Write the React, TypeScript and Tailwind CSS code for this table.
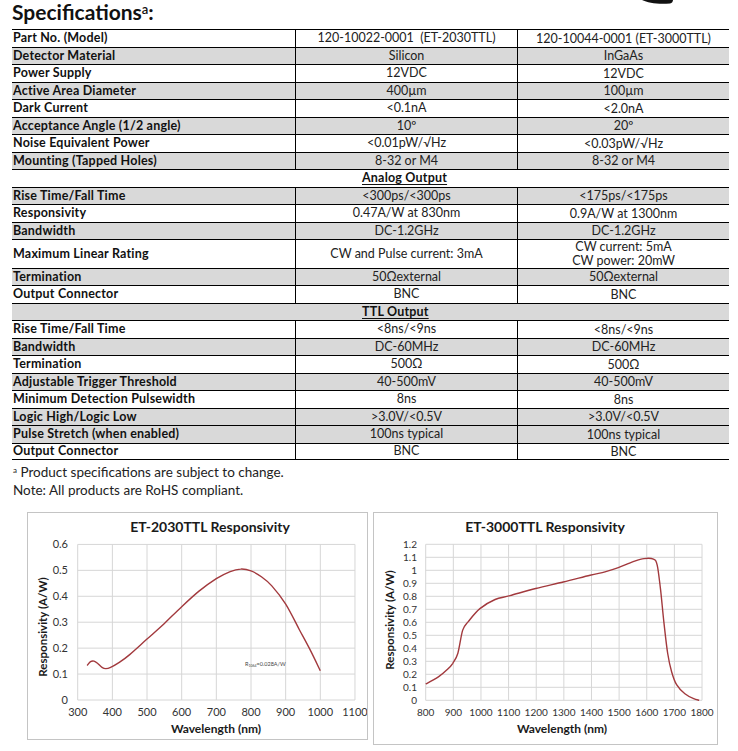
type Row = {
  label?: string
  a?: string
  b?: string | string[]
  gray?: boolean
  section?: string
  tall?: boolean
}

const rows: Row[] = [
  { label: "Part No. (Model)", a: "120-10022-0001\u00a0\u00a0(ET-2030TTL)", b: "120-10044-0001 (ET-3000TTL)" },
  { label: "Detector Material", a: "Silicon", b: "InGaAs", gray: true },
  { label: "Power Supply", a: "12VDC", b: "12VDC" },
  { label: "Active Area Diameter", a: "400µm", b: "100µm", gray: true },
  { label: "Dark Current", a: "<0.1nA", b: "<2.0nA" },
  { label: "Acceptance Angle (1/2 angle)", a: "10º", b: "20º", gray: true },
  { label: "Noise Equivalent Power", a: "<0.01pW/√Hz", b: "<0.03pW/√Hz" },
  { label: "Mounting (Tapped Holes)", a: "8-32 or M4", b: "8-32 or M4", gray: true },
  { section: "Analog Output" },
  { label: "Rise Time/Fall Time", a: "<300ps/<300ps", b: "<175ps/<175ps", gray: true },
  { label: "Responsivity", a: "0.47A/W at 830nm", b: "0.9A/W at 1300nm" },
  { label: "Bandwidth", a: "DC-1.2GHz", b: "DC-1.2GHz", gray: true },
  { label: "Maximum Linear Rating", a: "CW and Pulse current: 3mA", b: ["CW current: 5mA", "CW power: 20mW"], tall: true },
  { label: "Termination", a: "50Ωexternal", b: "50Ωexternal", gray: true },
  { label: "Output Connector", a: "BNC", b: "BNC" },
  { section: "TTL Output", gray: true },
  { label: "Rise Time/Fall Time", a: "<8ns/<9ns", b: "<8ns/<9ns" },
  { label: "Bandwidth", a: "DC-60MHz", b: "DC-60MHz", gray: true },
  { label: "Termination", a: "500Ω", b: "500Ω" },
  { label: "Adjustable Trigger Threshold", a: "40-500mV", b: "40-500mV", gray: true },
  { label: "Minimum Detection Pulsewidth", a: "8ns", b: "8ns" },
  { label: "Logic High/Logic Low", a: ">3.0V/<0.5V", b: ">3.0V/<0.5V", gray: true },
  { label: "Pulse Stretch (when enabled)", a: "100ns typical", b: "100ns typical", gray: true },
  { label: "Output Connector", a: "BNC", b: "BNC" },
]

// wavelength (nm), responsivity (A/W)
const si: [number, number][] = [
  [327, 0.133], [337, 0.148], [347, 0.15], [357, 0.142], [370, 0.126], [381, 0.121], [395, 0.126],
  [420, 0.145], [450, 0.175], [500, 0.235], [550, 0.295], [600, 0.36], [650, 0.42], [700, 0.468],
  [740, 0.495], [770, 0.505], [800, 0.498], [830, 0.475], [860, 0.44], [900, 0.37], [940, 0.27],
  [970, 0.195], [1000, 0.113],
]

const ingaas: [number, number][] = [
  [800, 0.125], [846, 0.18], [880, 0.24], [898, 0.285], [916, 0.36], [934, 0.54], [954, 0.605],
  [996, 0.705], [1051, 0.775], [1105, 0.805], [1198, 0.86], [1298, 0.91], [1395, 0.962],
  [1449, 0.988], [1497, 1.02], [1551, 1.066], [1590, 1.09], [1624, 1.086], [1638, 1.04],
  [1650, 0.85], [1662, 0.6], [1676, 0.36], [1690, 0.22], [1708, 0.12], [1738, 0.05], [1770, 0.012],
  [1790, 0],
]

function smoothPath(pts: [number, number][]) {
  let d = `M${pts[0][0].toFixed(1)},${pts[0][1].toFixed(1)}`
  for (let i = 0; i < pts.length - 1; i++) {
    const p0 = pts[i - 1] || pts[i]
    const p1 = pts[i]
    const p2 = pts[i + 1]
    const p3 = pts[i + 2] || p2
    const c1x = p1[0] + (p2[0] - p0[0]) / 6
    const c1y = p1[1] + (p2[1] - p0[1]) / 6
    const c2x = p2[0] - (p3[0] - p1[0]) / 6
    const c2y = p2[1] - (p3[1] - p1[1]) / 6
    d += ` C${c1x.toFixed(1)},${c1y.toFixed(1)} ${c2x.toFixed(1)},${c2y.toFixed(1)} ${p2[0].toFixed(1)},${p2[1].toFixed(1)}`
  }
  return d
}

type ChartProps = {
  box: { x: number; y: number; w: number; h: number }
  title: string
  titleX: number
  xFrom: number
  xTo: number
  x0: number
  xScale: number
  yTicks: number
  y0: number
  yScale: number
  yLabelX: number
  yTitleX: number
  yTitleY: number
  xTitleX: number
  tickSize: number
  data: [number, number][]
  note?: boolean
}

function Chart(p: ChartProps) {
  const px = (w: number) => p.x0 + (w - p.xFrom) * p.xScale
  const py = (r: number) => p.y0 - r * p.yScale
  const xs: number[] = []
  for (let w = p.xFrom; w <= p.xTo; w += 100) xs.push(w)
  const ys: number[] = []
  for (let i = 0; i <= p.yTicks; i++) ys.push(i / 10)
  const right = px(p.xTo)
  const top = py(p.yTicks / 10)
  const path = smoothPath(p.data.map(([w, r]) => [px(w), py(r)]))

  return (
    <div className="border border-[#c4c4c4] bg-white" style={{ width: p.box.w, height: p.box.h }}>
      <svg
        width={p.box.w - 2}
        height={p.box.h - 2}
        viewBox={`${p.box.x + 1} ${p.box.y + 1} ${p.box.w - 2} ${p.box.h - 2}`}
        className="block"
        fontFamily="Lato, 'Open Sans', sans-serif"
      >
        <text x={p.titleX} y={532} textAnchor="middle" fontSize={14} fontWeight={700} fill="#1a1a1a">
          {p.title}
        </text>
        {ys.map((v) => (
          <g key={v}>
            <line x1={p.x0} x2={right} y1={py(v)} y2={py(v)} stroke="#d6d6d6" strokeWidth={1} />
            <text x={p.yLabelX} y={py(v) + 4} textAnchor="end" fontSize={p.tickSize} fill="#333">
              {Number(v.toFixed(1)).toString()}
            </text>
          </g>
        ))}
        {xs.map((w) => (
          <g key={w}>
            <line x1={px(w)} x2={px(w)} y1={top} y2={p.y0} stroke="#d6d6d6" strokeWidth={1} />
            <text x={px(w)} y={716} textAnchor="middle" fontSize={p.tickSize} fill="#333">
              {w}
            </text>
          </g>
        ))}
        <path d={path} fill="none" stroke="#a2393d" strokeWidth={1.4} />
        <text x={p.xTitleX} y={733} textAnchor="middle" fontSize={12} fontWeight={700} fill="#1a1a1a">
          Wavelength (nm)
        </text>
        <text
          x={p.yTitleX}
          y={p.yTitleY}
          textAnchor="middle"
          fontSize={11.5}
          fontWeight={700}
          fill="#1a1a1a"
          transform={`rotate(-90 ${p.yTitleX} ${p.yTitleY})`}
          dominantBaseline="middle"
        >
          Responsivity (A/W)
        </text>
        {p.note && (
          <text x={245} y={666} fontSize={5.5} fill="#444">
            R<tspan fontSize={3.5} dy={1}>1064</tspan>
            <tspan dy={-1}>=0.028A/W</tspan>
          </text>
        )}
      </svg>
    </div>
  )
}

function TableRow({ row, last }: { row: Row; last: boolean }) {
  const bg = row.gray ? "bg-[#d9d9d9]" : "bg-white"
  const h = row.tall ? "h-[28.7px]" : "h-[17.5px]"
  const edge = last ? "border-b" : ""
  if (row.section) {
    return (
      <div className={`flex items-center border-t border-black ${edge} ${h} ${bg}`}>
        <span className="pl-[350px] text-[12.5px] tracking-[0.2px] font-bold underline underline-offset-2 leading-none text-[#111]">
          {row.section}
        </span>
      </div>
    )
  }
  const b = Array.isArray(row.b) ? row.b : [row.b]
  return (
    <div className={`flex border-t border-black ${edge} ${h} ${bg}`}>
      <div className="w-[283px] flex items-center pl-[1px] text-[12.5px] tracking-[0.2px] font-bold text-[#111] leading-none">
        {row.label}
      </div>
      <div className="w-[222px] flex items-center justify-center border-l border-black text-[12.5px] text-[#222] leading-none">
        {row.a}
      </div>
      <div className="w-[212px] flex flex-col items-center justify-center border-l border-black text-[12.5px] text-[#222] leading-[13.5px]">
        {b.map((t) => (
          <span key={t}>{t}</span>
        ))}
      </div>
    </div>
  )
}

export default function App() {
  return (
    <div className="relative w-[738px] h-[751px] overflow-hidden bg-white font-['Lato','Open_Sans',sans-serif]">
      <svg className="absolute left-[640px] top-0" width="36" height="6" viewBox="0 0 36 6">
        <path d="M2 0 C8 3 18 4.5 30 3.5 C32 3 33 1.5 33 0 Z" fill="#111" />
      </svg>

      <div className="h-[29px] pl-[12px] text-[21px] font-bold leading-[24px] text-[#111]">
        Specifications<sup className="text-[13px] font-semibold">a</sup>:
      </div>

      <div className="ml-[12px] w-[717px]">
        {rows.map((r, i) => (
          <TableRow key={i} row={r} last={i === rows.length - 1} />
        ))}
      </div>

      <div className="pl-[13px] pt-[3px] text-[13.5px] leading-[18px] text-[#222]">
        <div>
          <sup className="text-[8px]">a</sup> Product specifications are subject to change.
        </div>
        <div>Note: All products are RoHS compliant.</div>
      </div>

      <div className="mt-[13px] pl-[27px] flex items-start gap-[5px]">
        <Chart
          box={{ x: 27, y: 512, w: 341, h: 228 }}
          title="ET-2030TTL Responsivity"
          titleX={210}
          xFrom={300}
          xTo={1100}
          x0={77.7}
          xScale={0.3466}
          yTicks={6}
          y0={700}
          yScale={259.3}
          yLabelX={68}
          yTitleX={44}
          yTitleY={627}
          xTitleX={216}
          tickSize={11}
          data={si}
          note
        />
        <Chart
          box={{ x: 373, y: 512, w: 345, h: 233 }}
          title="ET-3000TTL Responsivity"
          titleX={545}
          xFrom={800}
          xTo={1800}
          x0={425.7}
          xScale={0.2763}
          yTicks={12}
          y0={700.3}
          yScale={130}
          yLabelX={417}
          yTitleX={391}
          yTitleY={620}
          xTitleX={562}
          tickSize={10}
          data={ingaas}
        />
      </div>
    </div>
  )
}
